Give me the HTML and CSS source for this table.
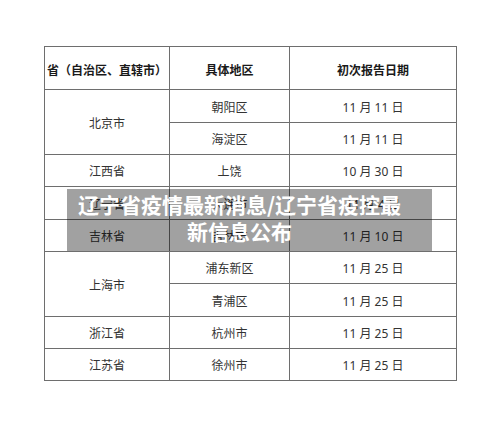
FILE: index.html
```html
<!DOCTYPE html>
<html lang="zh">
<head>
<meta charset="utf-8">
<link rel="stylesheet" href="styles.css">
</head>
<body>
<div class="page">
  <div class="grid">
    <div class="cell head">省（自治区、直辖市）</div>
    <div class="cell head">具体地区</div>
    <div class="cell head">初次报告日期</div>

    <div class="cell span2">北京市</div>
    <div class="cell">朝阳区</div>
    <div class="cell">11 月 11 日</div>
    <div class="cell">海淀区</div>
    <div class="cell">11 月 11 日</div>

    <div class="cell">江西省</div>
    <div class="cell">上饶</div>
    <div class="cell">10 月 30 日</div>

    <div class="cell">辽宁省</div>
    <div class="cell">大连市</div>
    <div class="cell">11 月 4 日</div>

    <div class="cell">吉林省</div>
    <div class="cell">吉林市</div>
    <div class="cell">11 月 10 日</div>

    <div class="cell span2">上海市</div>
    <div class="cell">浦东新区</div>
    <div class="cell">11 月 25 日</div>
    <div class="cell">青浦区</div>
    <div class="cell">11 月 25 日</div>

    <div class="cell">浙江省</div>
    <div class="cell">杭州市</div>
    <div class="cell">11 月 25 日</div>

    <div class="cell">江苏省</div>
    <div class="cell">徐州市</div>
    <div class="cell">11 月 25 日</div>
  </div>

  <div class="banner">
    <div class="banner-text">辽宁省疫情最新消息/辽宁省疫控最<br>新信息公布</div>
  </div>
</div>
</body>
</html>
```

FILE: styles.css
```css
html, body {
  margin: 0;
  padding: 0;
  background: #ffffff;
}

.page {
  position: relative;
  width: 500px;
  height: 441px;
  overflow: hidden;
  padding-top: 46px;
  padding-left: 44px;
  box-sizing: border-box;
  font-family: "Noto Sans", "Noto Sans CJK SC", sans-serif;
}

.grid {
  display: grid;
  grid-template-columns: 124px 119px 166px;
  grid-template-rows: 42px 32px 31px 31px 32px 31px 31px 32px 31px 31px;
  gap: 1px;
  padding: 1px;
  width: max-content;
  background: #6e6e6e;
}

.cell {
  background: #ffffff;
  display: flex;
  align-items: center;
  justify-content: center;
  font-size: 12px;
  color: #333333;
  padding-top: 1px;
  box-sizing: border-box;
}

.head {
  font-weight: bold;
  color: #1a1a1a;
  padding-top: 3px;
}

.span2 {
  grid-row: span 2;
}

.banner {
  position: absolute;
  left: 67px;
  top: 189px;
  width: 365px;
  height: 62px;
  background: rgba(0, 0, 0, 0.37);
  box-sizing: border-box;
  padding: 2px 0 0 10px;
}

.banner-text {
  width: 325px;
  text-align: center;
  color: #ffffff;
  font-family: "Noto Sans CJK SC", sans-serif;
  font-weight: bold;
  font-size: 21px;
  line-height: 27px;
  white-space: nowrap;
}
```
